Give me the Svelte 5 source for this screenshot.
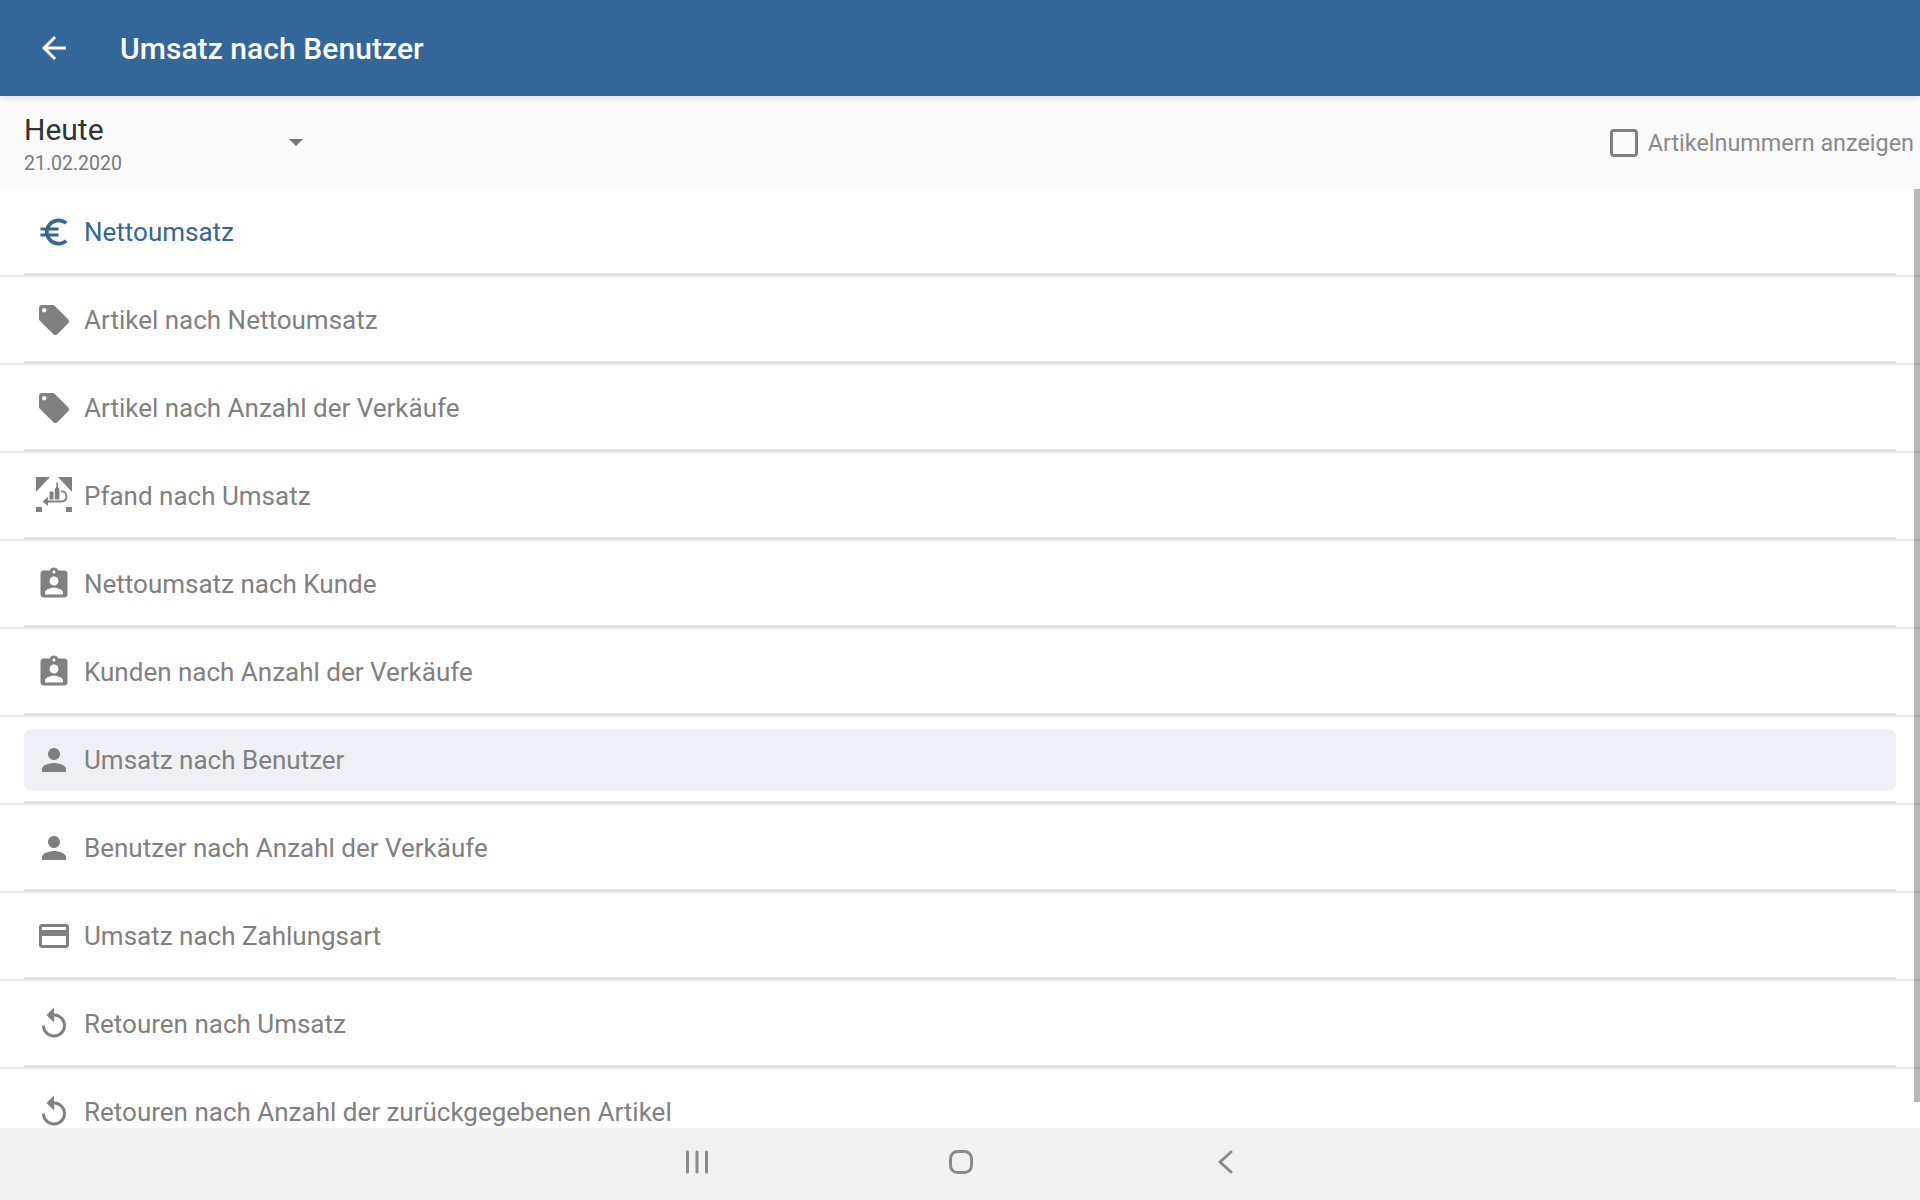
<script>
  const paths = {
    euro: 'M15 18.5c-2.51 0-4.68-1.42-5.76-3.5H15v-2H8.58c-.05-.33-.08-.66-.08-1s.03-.67.08-1H15V9H9.24C10.32 6.92 12.5 5.5 15 5.5c1.61 0 3.09.59 4.23 1.57L21 5.3C19.41 3.87 17.3 3 15 3c-3.92 0-7.24 2.51-8.48 6H3v2h3.06c-.04.33-.06.66-.06 1s.02.67.06 1H3v2h3.52c1.24 3.49 4.56 6 8.48 6 2.31 0 4.41-.87 6-2.3l-1.78-1.77c-1.13.98-2.6 1.57-4.22 1.57z',
    label: 'M21.41 11.58l-9-9C12.05 2.22 11.55 2 11 2H4c-1.1 0-2 .9-2 2v7c0 .55.22 1.05.59 1.42l9 9c.36.36.86.58 1.41.58.55 0 1.05-.22 1.41-.59l7-7c.37-.36.59-.86.59-1.41 0-.55-.23-1.06-.59-1.42zM5.5 7C4.67 7 4 6.33 4 5.5S4.67 4 5.5 4 7 4.67 7 5.5 6.33 7 5.5 7z',
    badge: 'M19 3h-4.18C14.4 1.84 13.3 1 12 1c-1.3 0-2.4.84-2.82 2H5c-1.1 0-2 .9-2 2v14c0 1.1.9 2 2 2h14c1.1 0 2-.9 2-2V5c0-1.1-.9-2-2-2zm-7 0c.55 0 1 .45 1 1s-.45 1-1 1-1-.45-1-1 .45-1 1-1zm0 4c1.66 0 3 1.34 3 3s-1.34 3-3 3-3-1.34-3-3 1.34-3 3-3zm6 12H6v-1.4c0-2 4-3.1 6-3.1s6 1.1 6 3.1V19z',
    person: 'M12 12c2.21 0 4-1.79 4-4s-1.79-4-4-4-4 1.79-4 4 1.79 4 4 4zm0 2c-2.67 0-8 1.34-8 4v2h16v-2c0-2.66-5.33-4-8-4z',
    card: 'M20 4H4c-1.11 0-1.99.89-1.99 2L2 18c0 1.11.89 2 2 2h16c1.11 0 2-.89 2-2V6c0-1.11-.89-2-2-2zm0 14H4v-6h16v6zm0-10H4V6h16v2z',
    replay: 'M12 5V1L7 6l5 5V7c3.31 0 6 2.69 6 6s-2.69 6-6 6-6-2.69-6-6H4c0 4.42 3.58 8 8 8s8-3.58 8-8-3.58-8-8-8z'
  };
  const rows = [
    { icon: 'euro', text: 'Nettoumsatz', active: true },
    { icon: 'label', text: 'Artikel nach Nettoumsatz' },
    { icon: 'label', text: 'Artikel nach Anzahl der Verkäufe' },
    { icon: 'pfand', text: 'Pfand nach Umsatz' },
    { icon: 'badge', text: 'Nettoumsatz nach Kunde' },
    { icon: 'badge', text: 'Kunden nach Anzahl der Verkäufe' },
    { icon: 'person', text: 'Umsatz nach Benutzer', selected: true },
    { icon: 'person', text: 'Benutzer nach Anzahl der Verkäufe' },
    { icon: 'card', text: 'Umsatz nach Zahlungsart' },
    { icon: 'replay', text: 'Retouren nach Umsatz' },
    { icon: 'replay', text: 'Retouren nach Anzahl der zurückgegebenen Artikel' }
  ];
</script>

<div class="screen">
  <header class="topbar">
    <svg class="back" viewBox="0 0 24 24" aria-hidden="true"><path d="M20 11H7.83l5.59-5.59L12 4l-8 8 8 8 1.41-1.41L7.83 13H20v-2z" /></svg>
    <h1>Umsatz nach Benutzer</h1>
  </header>

  <div class="filters">
    <div class="period">
      <div class="period-text">
        <div class="period-name">Heute</div>
        <div class="period-date">21.02.2020</div>
      </div>
      <span class="caret"></span>
    </div>
    <div class="check">
      <span class="box"></span>
      <span class="check-label">Artikelnummern anzeigen</span>
    </div>
  </div>

  <main class="list">
    {#each rows as row}
      <div class="row">
        <div class="row-inner">
          <div class="item" class:selected={row.selected} class:active={row.active}>
            {#if row.icon === 'pfand'}
              <svg class="icon" viewBox="36 478 36 36" aria-hidden="true">
                <path d="M36 477h14l-14 15zM72 477H58l14 15zM36 507h6v5h-6zM66 507h6v5h-6z" />
                <path d="M54.800 499.500v-10.500l1.500-2v-4.500h1.600v4.500l1.500 2v10.500zM49.500 491.500h4v8h-4z" />
                <path class="arrow" d="M61 491.500c4-.5 5.500 2 5.500 5s-2 5-5.500 5H45" />
                <path d="M48 497l-5.500 4.500 5.500 4.500z" />
              </svg>
            {:else}
              <svg class="icon" viewBox="0 0 24 24" aria-hidden="true"><path d={paths[row.icon]} /></svg>
            {/if}
            <span class="text">{row.text}</span>
          </div>
        </div>
      </div>
    {/each}
    <div class="scrollbar"></div>
  </main>

  <footer class="nav">
    <svg class="nav-icon" viewBox="0 0 24 24" aria-hidden="true"><path d="M2.500 2v20M12 2v20M21.500 2v20" /></svg>
    <svg class="nav-icon" viewBox="0 0 24 24" aria-hidden="true"><rect x="1.500" y="1.500" width="21" height="21" rx="7" /></svg>
    <svg class="nav-icon" viewBox="0 0 24 24" aria-hidden="true"><path d="M18 2 7 12 18 22" /></svg>
  </footer>
</div>

<style>
  :global(body) {
    margin: 0;
    background: #fff;
  }
  .screen {
    width: 1920px;
    height: 1200px;
    display: flex;
    flex-direction: column;
    overflow: hidden;
    font-family: Roboto, "Liberation Sans", sans-serif;
    background: #fff;
  }
  .topbar {
    flex: none;
    height: 96px;
    display: flex;
    align-items: center;
    padding-left: 36px;
    box-sizing: border-box;
    background: #336699;
    box-shadow: 0 2px 6px rgba(0, 0, 0, 0.1);
    position: relative;
    z-index: 2;
  }
  .back {
    width: 36px;
    height: 36px;
    fill: #fff;
  }
  h1 {
    margin: 0 0 0 48px;
    font-size: 30px;
    font-weight: 500;
    letter-spacing: 0.06px;
    color: #fff;
  }
  .filters {
    flex: none;
    height: 93px;
    display: flex;
    align-items: center;
    justify-content: space-between;
    background: #fafafa;
    padding: 0 6px 0 24px;
    box-sizing: border-box;
  }
  .period {
    display: flex;
    align-items: center;
    width: 279px;
    justify-content: space-between;
  }
  .period-text {
    padding-top: 4px;
  }
  .period-name {
    font-size: 30px;
    line-height: 36px;
    color: #333;
  }
  .period-date {
    font-size: 19.500px;
    line-height: 26px;
    margin-top: 3px;
    color: #7a7a7a;
  }
  .caret {
    width: 0;
    height: 0;
    border-left: 7px solid transparent;
    border-right: 7px solid transparent;
    border-top: 7px solid #757575;
  }
  .check {
    display: flex;
    align-items: center;
    gap: 10px;
  }
  .box {
    width: 28px;
    height: 28px;
    box-sizing: border-box;
    border: 3px solid #808080;
    border-radius: 4px;
  }
  .check-label {
    font-size: 23.400px;
    color: #8a8a8a;
  }
  .list {
    flex: 1;
    min-height: 0;
    overflow: hidden;
    position: relative;
  }
  .row {
    height: 88px;
    box-sizing: border-box;
    border-bottom: 2px solid #e8e8e8;
  }
  .row-inner {
    height: 86px;
    margin: 0 24px;
    box-sizing: border-box;
    border-bottom: 2px solid #e2e3e3;
    padding-top: 12px;
  }
  .item {
    height: 62px;
    display: flex;
    align-items: center;
    gap: 12px;
    padding-left: 12px;
    border-radius: 8px;
    color: #808080;
  }
  .item.selected {
    background: #eff0f5;
  }
  .item.active {
    color: #336699;
  }
  .icon {
    flex: none;
    width: 36px;
    height: 36px;
    fill: currentColor;
    overflow: visible;
  }
  .arrow {
    fill: none;
    stroke: currentColor;
    stroke-width: 1.800;
  }
  .text {
    font-size: 26px;
    white-space: nowrap;
  }
  .scrollbar {
    position: absolute;
    top: 0;
    right: 0;
    width: 6px;
    height: 913px;
    background: rgba(0, 0, 0, 0.28);
  }
  .nav {
    flex: none;
    height: 72px;
    display: flex;
    align-items: center;
    justify-content: center;
    gap: 240px;
    padding: 0 0 4px 2px;
    box-sizing: border-box;
    background: #f1f1f1;
  }
  .nav-icon {
    width: 24px;
    height: 24px;
    fill: none;
    stroke: #8a8a8a;
    stroke-width: 3px;
    stroke-linecap: round;
    stroke-linejoin: round;
  }
</style>
